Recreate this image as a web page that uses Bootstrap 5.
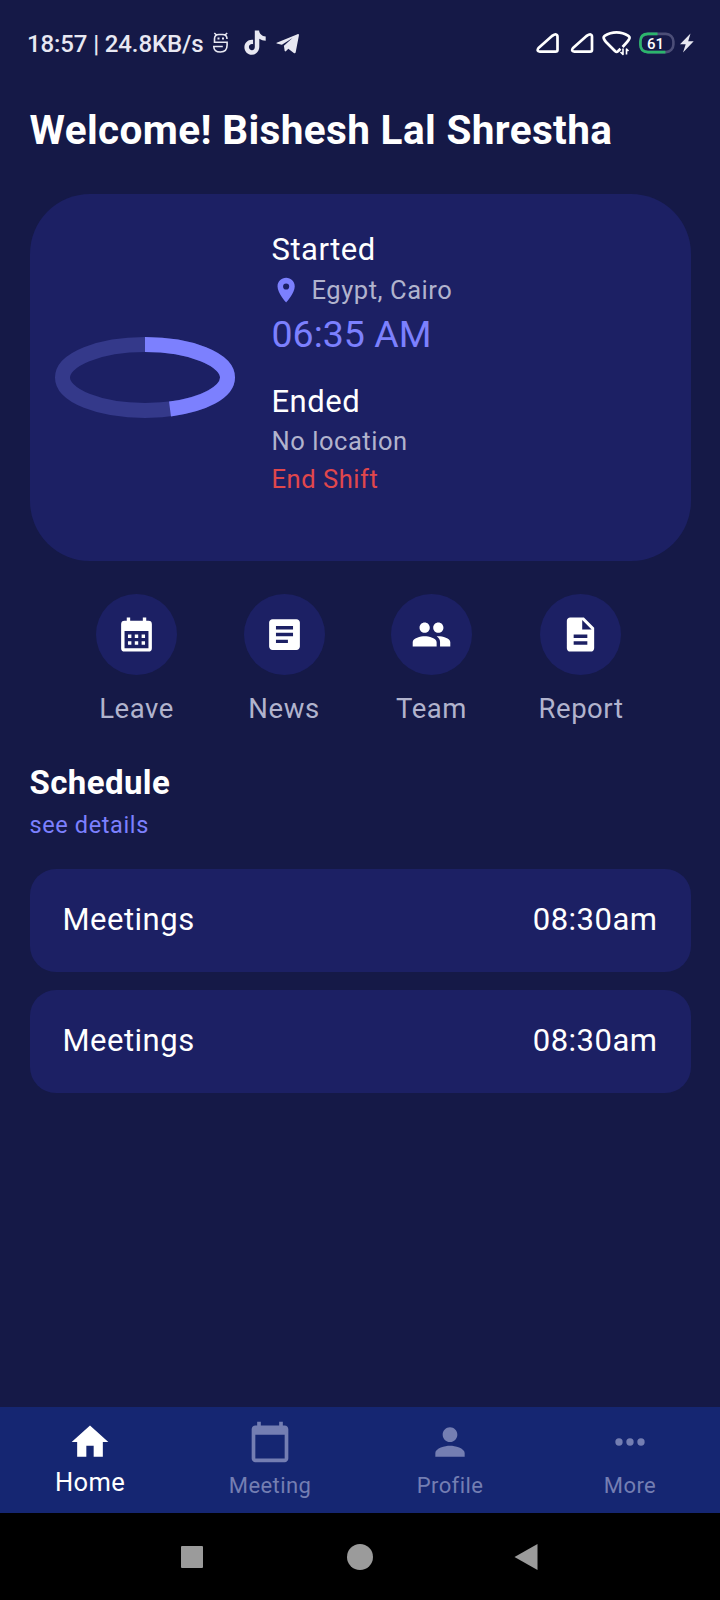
<!DOCTYPE html>
<html lang="en">
<head>
<meta charset="utf-8">
<meta name="viewport" content="width=device-width, initial-scale=1">
<title>Attendance</title>
<link rel="stylesheet" href="https://cdn.jsdelivr.net/npm/bootstrap@5.3.0/dist/css/bootstrap.min.css">
<style>
  body { background: #151947; color: #fff; font-family: Roboto, "Liberation Sans", sans-serif; letter-spacing: .55px; }
  .screen { height: 1600px; overflow: hidden; }
  .gutter { padding-left: 29.5px; padding-right: 29.5px; }
  svg { display: block; flex: none; }
  .status { height: 90px; padding: 30px 25px 0 27px; color: #e8e8f2; font-size: 24px; font-weight: 500; letter-spacing: -.12px; line-height: 29px; }
  .welcome { font-size: 40.5px; font-weight: 700; line-height: 48px; margin: 15.5px 0 40.8px; letter-spacing: .37px; }
  .shift { height: 366.7px; border-radius: 60px; background: #1c2064; padding: 38px 25px 0; }
  .shift-ring { width: 217px; height: 366px; margin-top: -38px; }
  .t-title { font-size: 31px; line-height: 36px; letter-spacing: .5px; }
  .t-sub { font-size: 25.5px; color: #b1b3cd; }
  .t-time { font-size: 37.5px; line-height: 44px; color: #7c80fe; letter-spacing: 0; }
  .t-end { font-size: 25.5px; line-height: 31px; color: #e0474c; }
  .round { width: 81px; height: 81px; background: #1c2064; }
  .quick { margin-top: 33px; padding-right: .5px; }
  .quick-label { font-size: 27.5px; line-height: 33px; color: #b1b3cd; margin-top: 16.7px; }
  .sched { font-size: 33px; font-weight: 700; line-height: 40px; margin: 38.3px 0 0; letter-spacing: .4px; }
  .details { font-size: 23.5px; line-height: 28px; margin-top: 7.7px; color: #7c80fe; letter-spacing: .62px; }
  .slot { height: 103px; border-radius: 26px; background: #1c2064; padding: 0 33px; font-size: 31px; letter-spacing: .5px; }
  .tabs { height: 106px; background: #152672; padding-top: 13.2px; }
  .tab { color: #747eb2; font-size: 22px; line-height: 30px; letter-spacing: .4px; }
  .tab svg { margin-bottom: 6.6px; }
  .tab.current { color: #fff; font-size: 25.5px; }
  .tab.current svg { margin-bottom: 3.3px; }
  .sys { height: 87px; background: #000; }
  .sys div { width: 168px; }
</style>
</head>
<body>
<div class="screen d-flex flex-column">
  <div class="status d-flex justify-content-between align-items-start">
    <div class="d-flex">
      <span style="width:186px" class="text-nowrap">18:57 | 24.8KB/s</span>
      <svg width="16" height="28" viewBox="213 30 16 28" fill="none" stroke="#e8e8f2" stroke-width="1.600"><path d="M214.300 33l2.200 2M227.200 33l-2.200 2M214.500 42.200v-3.200q0-4.500 4.500-4.500h3.500q4.500 0 4.500 4.500M213.700 42.200h13.400v2.800q0 7-6.700 7t-6.600-5.500h9"/><path stroke-width="2" d="M218.500 37.500v2M223 37.500v2"/></svg>
      <svg style="margin-left:14.500px;margin-right:10px" width="22" height="28" viewBox="243 30 22 28" fill="#e8e8f2"><path d="M253.800 30.500h4.300c.3 3.300 2.700 5.700 6.600 6v4.300c-2.300 0-4.500-.7-6.400-2v7.800c0 4.900-3.300 8.200-7.400 8.200s-7.500-3.200-7.500-7.600c0-4.700 3.800-8.100 8.700-7.500v4.500c-2.300-.7-4.200.8-4.200 2.900 0 1.900 1.500 3.200 3.100 3.200 1.800 0 2.800-1.300 2.800-3.200z"/></svg>
      <svg width="24" height="28" viewBox="276 30 24 28" fill="#e8e8f2"><path d="M276.700 42.700l20.800-8.500c1-.4 1.600.2 1.400 1.300l-3.200 16.700c-.2 1.100-1 1.400-1.900.8l-5.500-4.200-2.700 2.600-.9-.3-.8-5.400 8.600-7.600-10.600 6.600-5.100-1.300c-.6-.2-.6-.5-.1-.7z"/></svg>
    </div>
    <svg width="160" height="28" viewBox="535 30 160 28" fill="none" stroke="#fff" stroke-width="2.700" stroke-linejoin="round">
      <path d="M538.500 48l13.500-12q5.500-3.500 5.500 1v13q0 1.700-2 1.700h-15.500q-4-.5-1.500-3.700z"/>
      <path d="M573 48l13.500-12q5.500-3.500 5.500 1v13q0 1.700-2 1.700h-15.500q-4-.5-1.500-3.700z"/>
      <path d="M603.800 38.500q-.6-1.600 1.200-2.900 5-3.300 11.500-3.300t11.500 3.300q2 1.300 1.400 2.900-.8 1.900-2.300 3.500l-4.500 5M603.800 38.500q.7 1.900 2.200 3.500l9.200 9.200q1.400 1.200 2.800 0l2.500-2.500"/>
      <path stroke-width="1.600" d="M623 48.500v6l-2.500-2.500M626.500 54.500v-5.500l2 2"/>
      <rect x="640.400" y="33.900" width="33" height="18.200" rx="7.500" stroke="#4c4e77" stroke-width="2.600"/>
      <path stroke="#2bb56c" stroke-width="2.600" d="M657.500 33.900h-9.600q-7.500 0-7.500 7.500v3.200q0 7.500 7.500 7.500h17.500"/>
      <text x="647" y="48.500" font-size="15" font-weight="500" fill="#fff" stroke="none">61</text>
      <path fill="#e8e8f2" stroke="none" d="M690.500 33.500l-10.500 10.800h5.700l-2.700 8.200 10.700-11.300h-5.500z"/>
    </svg>
  </div>

  <main class="gutter flex-grow-1">
    <h1 class="welcome text-nowrap">Welcome! Bishesh Lal Shrestha</h1>

    <section class="shift d-flex">
      <div class="shift-ring d-flex align-items-center">
        <svg width="180" height="81" viewBox="-90 -40.500 180 81" fill="none" stroke-width="15"><ellipse rx="82.500" ry="33" stroke="#34398a"/><path stroke="#7c80fe" d="M0-33A82.500 33 0 0 1 82.500 0A82.500 33 0 0 1 25 31.450"/></svg>
      </div>
      <div>
        <div class="t-title">Started</div>
        <div class="t-sub d-flex align-items-center" style="line-height:44px"><svg width="29.500" height="29.500" viewBox="0.500 0.500 24 24" fill="#7c80fe"><path d="M12 2C8.130 2 5 5.130 5 9c0 5.250 7 13 7 13s7-7.750 7-13c0-3.870-3.130-7-7-7zm0 9.500a2.500 2.500 0 0 1 0-5 2.500 2.500 0 0 1 0 5z"/></svg><span style="margin-left:10.500px">Egypt, Cairo</span></div>
        <div class="t-time">06:35 AM</div>
        <div class="t-title" style="margin-top:28px">Ended</div>
        <div class="t-sub" style="line-height:43.500px">No location</div>
        <div class="t-end">End Shift</div>
      </div>
    </section>

    <section class="quick d-flex justify-content-evenly text-center">
      <div class="d-flex flex-column align-items-center">
        <div class="round rounded-circle d-flex align-items-center justify-content-center"><svg width="41" height="41" viewBox="0 0 24 24" fill="#fff"><path fill-rule="evenodd" d="M6.300 2h2v2h7.400V2h2v2H19a2 2 0 0 1 2 2v14a2 2 0 0 1-2 2H5a2 2 0 0 1-2-2V6a2 2 0 0 1 2-2h1.300zM5 10v10h14V10zM7 12h2v2H7zM11 12h2v2h-2zM15 12h2v2h-2zM7 16h2v2H7zM11 16h2v2h-2zM15 16h2v2h-2z"/></svg></div>
        <div class="quick-label">Leave</div>
      </div>
      <div class="d-flex flex-column align-items-center">
        <div class="round rounded-circle d-flex align-items-center justify-content-center"><svg width="41" height="41" viewBox="0 0 24 24" fill="#fff"><path d="M19 3H5c-1.100 0-2 .9-2 2v14c0 1.100.9 2 2 2h14c1.100 0 2-.9 2-2V5c0-1.100-.9-2-2-2zm-5 14H7v-2h7v2zm3-4H7v-2h10v2zm0-4H7V7h10v2z"/></svg></div>
        <div class="quick-label">News</div>
      </div>
      <div class="d-flex flex-column align-items-center">
        <div class="round rounded-circle d-flex align-items-center justify-content-center"><svg width="41" height="41" viewBox="0 0 24 24" fill="#fff"><path d="M16 11c1.660 0 2.990-1.340 2.990-3S17.660 5 16 5s-3 1.340-3 3 1.340 3 3 3zm-8 0c1.660 0 2.990-1.340 2.990-3S9.660 5 8 5 5 6.340 5 8s1.340 3 3 3zm0 2c-2.330 0-7 1.170-7 3.500V19h14v-2.500c0-2.330-4.670-3.500-7-3.500zm8 0c-.29 0-.62.02-.97.05 1.160.84 1.970 1.970 1.970 3.450V19h6v-2.500c0-2.330-4.670-3.500-7-3.500z"/></svg></div>
        <div class="quick-label">Team</div>
      </div>
      <div class="d-flex flex-column align-items-center">
        <div class="round rounded-circle d-flex align-items-center justify-content-center"><svg width="41" height="41" viewBox="0 0 24 24" fill="#fff"><path d="M14 2H6c-1.100 0-2 .9-2 2v16c0 1.100.9 2 2 2h12c1.100 0 2-.9 2-2V8l-6-6zm2 16H8v-2h8v2zm0-4H8v-2h8v2zm-3-5V3.500L18.500 9H13z"/></svg></div>
        <div class="quick-label">Report</div>
      </div>
    </section>

    <h2 class="sched">Schedule</h2>
    <div class="details">see details</div>
    <div class="d-flex flex-column" style="gap:18px;margin-top:30.500px">
      <div class="slot d-flex align-items-center justify-content-between"><span>Meetings</span><span>08:30am</span></div>
      <div class="slot d-flex align-items-center justify-content-between"><span>Meetings</span><span>08:30am</span></div>
    </div>
  </main>

  <nav class="tabs row g-0 text-center flex-shrink-0">
    <div class="tab current col"><svg class="mx-auto" width="44" height="44" viewBox="0 0 24 24" fill="currentColor"><path d="M10 20v-6h4v6h5v-8h3L12 3 2 12h3v8z"/></svg>Home</div>
    <div class="tab col"><svg class="mx-auto" width="44" height="44" viewBox="0 0 24 24" fill="currentColor"><path d="M20 3h-1V1h-2v2H7V1H5v2H4c-1.100 0-2 .9-2 2v16c0 1.100.9 2 2 2h16c1.100 0 2-.9 2-2V5c0-1.100-.9-2-2-2zm0 18H4V8h16v13z"/></svg>Meeting</div>
    <div class="tab col"><svg class="mx-auto" width="44" height="44" viewBox="0 0 24 24" fill="currentColor"><path d="M12 12c2.210 0 4-1.790 4-4s-1.790-4-4-4-4 1.790-4 4 1.790 4 4 4zm0 2c-2.670 0-8 1.340-8 4v2h16v-2c0-2.660-5.330-4-8-4z"/></svg>Profile</div>
    <div class="tab col"><svg class="mx-auto" width="44" height="44" viewBox="0 0 24 24" fill="currentColor"><circle cx="6" cy="12" r="2"/><circle cx="12" cy="12" r="2"/><circle cx="18" cy="12" r="2"/></svg>More</div>
  </nav>
  <div class="sys d-flex justify-content-center align-items-center flex-shrink-0">
    <div><svg class="mx-auto" width="28" height="28" viewBox="0 0 28 28" fill="#9b9b9b"><rect x="3" y="3" width="22" height="22" rx="1"/></svg></div>
    <div><svg class="mx-auto" width="28" height="28" viewBox="0 0 28 28" fill="#9b9b9b"><circle cx="14" cy="14" r="13"/></svg></div>
    <div><svg class="mx-auto" width="28" height="28" viewBox="1 0 28 28" fill="#9b9b9b"><path d="M24.500 1v26L1.500 14z"/></svg></div>
  </div>
</div>
<script src="https://cdn.jsdelivr.net/npm/bootstrap@5.3.0/dist/js/bootstrap.bundle.min.js"></script>
</body>
</html>
